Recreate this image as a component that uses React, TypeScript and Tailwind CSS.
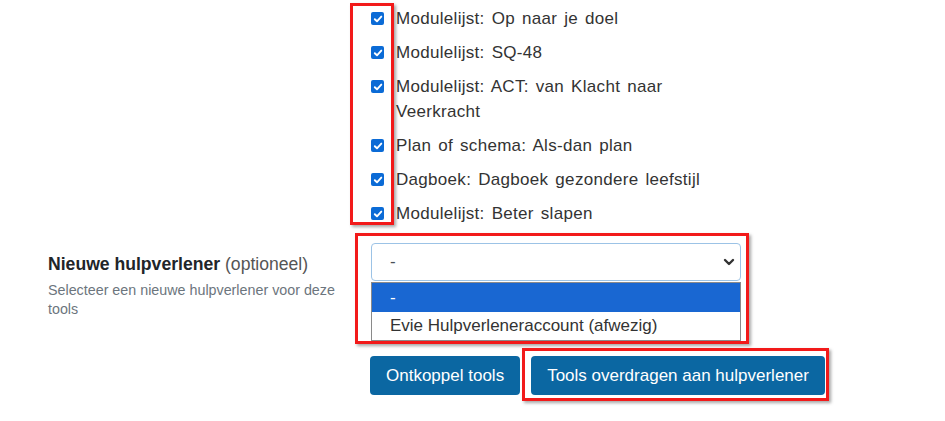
const tools = [
  'Modulelijst: Op naar je doel',
  'Modulelijst: SQ-48',
  'Modulelijst: ACT: van Klacht naar Veerkracht',
  'Plan of schema: Als-dan plan',
  'Dagboek: Dagboek gezondere leefstijl',
  'Modulelijst: Beter slapen',
]

function CheckedBox() {
  return (
    <span className="mt-[6px] flex h-[13px] w-[13px] flex-shrink-0 items-center justify-center rounded-[2px] bg-[#0b6bd6]">
      <svg width="10" height="10" viewBox="0 0 10 10" fill="none">
        <path d="M1.8 5.2 L4 7.3 L8.3 2.6" stroke="white" strokeWidth="1.9" strokeLinecap="round" strokeLinejoin="round" />
      </svg>
    </span>
  )
}

function Marker({ className }: { className: string }) {
  return (
    <div
      className={`pointer-events-none absolute border-[3px] border-[#f21a1a] shadow-[2px_2px_3px_rgba(0,0,0,0.35)] ${className}`}
    />
  )
}

export default function App() {
  return (
    <div className="relative h-[421px] w-[945px] overflow-hidden bg-white font-['Liberation_Sans',Arial,sans-serif] text-[17px] text-[#333]">
      <div className="flex flex-col gap-[9px] pl-[371px] pt-[6px]">
        {tools.map(t => (
          <label key={t} className="flex w-[345px] items-start gap-[12px] leading-[25px]">
            <CheckedBox />
            <span className="tracking-[0.3px] [word-spacing:2px]">{t}</span>
          </label>
        ))}
      </div>

      <div className="mt-[17px] grid grid-cols-[371px_370px]">
        <div className="pl-[48px] pt-[9px]">
          <div className="text-[17.6px] leading-[24px]">
            <span className="font-bold text-[#212529]">Nieuwe hulpverlener</span>{' '}
            <span className="text-[#555]">(optioneel)</span>
          </div>
          <div className="mt-[5px] w-[295px] text-[14.3px] leading-[19px] text-[#6c757d]">
            Selecteer een nieuwe hulpverlener voor deze tools
          </div>
        </div>
        <div>
          <div className="flex h-[38px] items-center justify-between rounded-[4px] border border-[#9cc3e6] bg-white pl-[18px] pr-[3px] text-[#495057]">
            <span>-</span>
            <svg width="14" height="14" viewBox="0 0 14 14" fill="none" className="mr-[1px]">
              <path d="M3 5 L7 9 L11 5" stroke="#333" strokeWidth="2.4" strokeLinecap="round" strokeLinejoin="round" />
            </svg>
          </div>
          <div className="mt-[1px] border border-[#8a8a8a] bg-white">
            <div className="flex h-[29px] items-center bg-[#1967d2] pl-[18px] text-white">-</div>
            <div className="flex h-[28px] items-center pl-[18px] text-[#333]">Evie Hulpverleneraccount (afwezig)</div>
          </div>
        </div>
      </div>

      <div className="mt-[15px] flex gap-[11px] pl-[370px]">
        <button className="h-[39px] rounded-[4px] bg-[#0b67a2] px-[16px] text-white">Ontkoppel tools</button>
        <button className="h-[39px] rounded-[4px] bg-[#0b67a2] px-[16px] text-white">Tools overdragen aan hulpverlener</button>
      </div>

      <Marker className="left-[350px] top-[3px] h-[222px] w-[44px]" />
      <Marker className="left-[355px] top-[233px] h-[111px] w-[394px]" />
      <Marker className="left-[522px] top-[348px] h-[53px] w-[307px]" />
    </div>
  )
}
